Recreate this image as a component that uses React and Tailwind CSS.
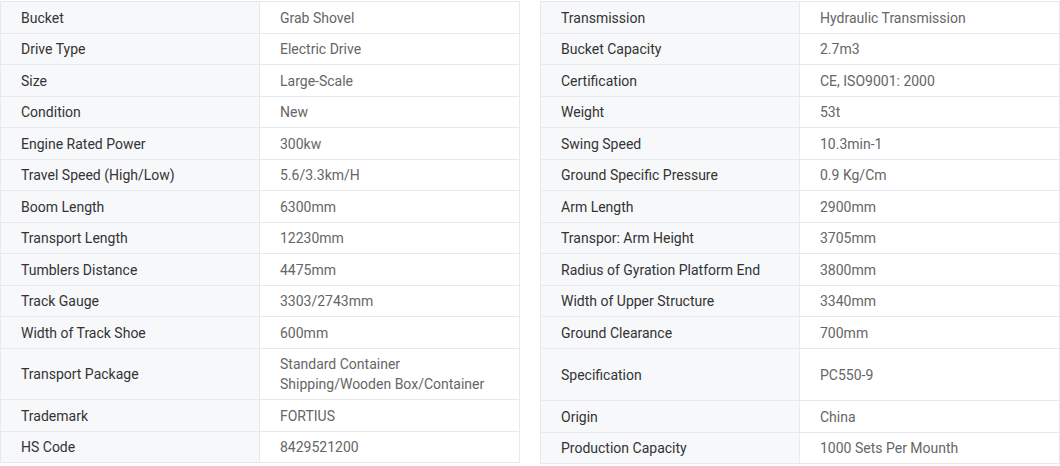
const left = [
  ["Bucket", "Grab Shovel"],
  ["Drive Type", "Electric Drive"],
  ["Size", "Large-Scale"],
  ["Condition", "New"],
  ["Engine Rated Power", "300kw"],
  ["Travel Speed (High/Low)", "5.6/3.3km/H"],
  ["Boom Length", "6300mm"],
  ["Transport Length", "12230mm"],
  ["Tumblers Distance", "4475mm"],
  ["Track Gauge", "3303/2743mm"],
  ["Width of Track Shoe", "600mm"],
  ["Transport Package", "Standard Container Shipping/Wooden Box/Container"],
  ["Trademark", "FORTIUS"],
  ["HS Code", "8429521200"],
];

const right = [
  ["Transmission", "Hydraulic Transmission"],
  ["Bucket Capacity", "2.7m3"],
  ["Certification", "CE, ISO9001: 2000"],
  ["Weight", "53t"],
  ["Swing Speed", "10.3min-1"],
  ["Ground Specific Pressure", "0.9 Kg/Cm"],
  ["Arm Length", "2900mm"],
  ["Transpor: Arm Height", "3705mm"],
  ["Radius of Gyration Platform End", "3800mm"],
  ["Width of Upper Structure", "3340mm"],
  ["Ground Clearance", "700mm"],
  ["Specification", "PC550-9", true],
  ["Origin", "China"],
  ["Production Capacity", "1000 Sets Per Mounth"],
];

function Table({ rows }) {
  return (
    <div className="flex-1 border border-[#e6e9ee] border-b-0">
      {rows.map(([k, v, tall], i) => (
        <div
          key={i}
          className="grid grid-cols-2 border-b border-[#e6e9ee]"
        >
          <div
            className={`flex items-center bg-[#f7f8fa] border-r border-[#e6e9ee] pl-5 pr-3 pt-[5.75px] pb-[4.75px] leading-5 text-[#333] ${tall ? "min-h-[51.5px]" : ""}`}
          >
            {k}
          </div>
          <div className="flex items-center bg-white pl-5 pr-3 pt-[5.75px] pb-[4.75px] leading-5 text-[#666]">
            {v}
          </div>
        </div>
      ))}
    </div>
  );
}

export default function App() {
  return (
    <div
      className="w-[1060px] h-[466px] bg-white flex gap-5 items-start pt-px text-[14px]"
      style={{ fontFamily: "Roboto, 'Noto Sans', sans-serif" }}
    >
      <Table rows={left} />
      <Table rows={right} />
    </div>
  );
}
